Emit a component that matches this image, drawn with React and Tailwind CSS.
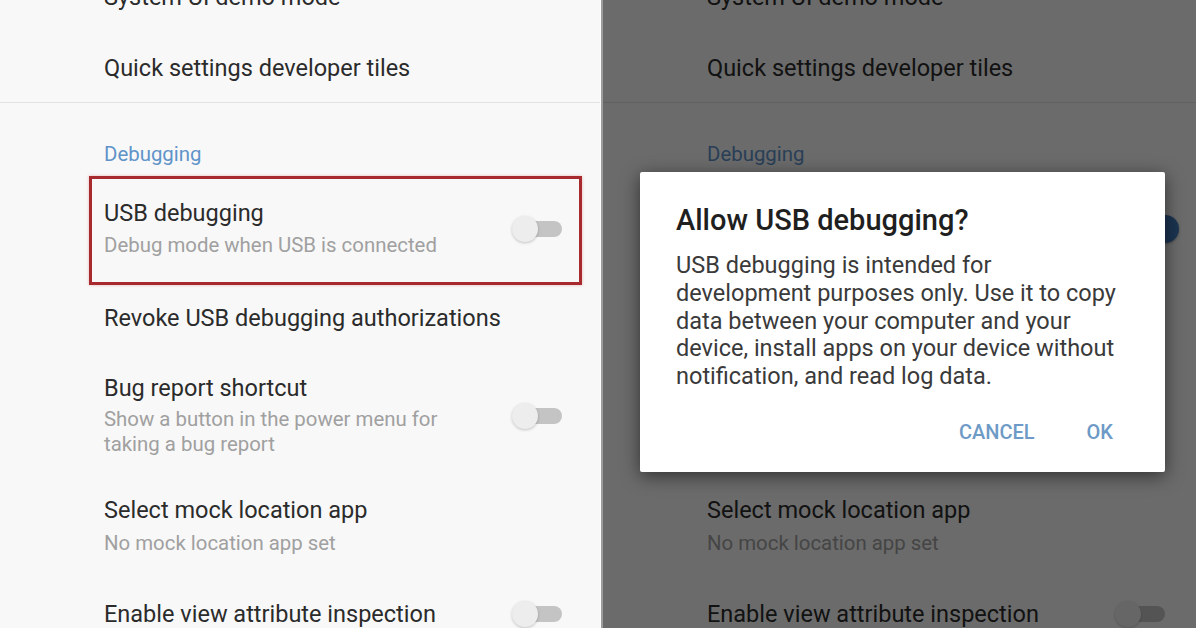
const TITLE = 'text-[23.5px] leading-[28px] text-[#2b2b2b]';
const SUMMARY = 'text-[20.4px] leading-[26px] text-[#a0a0a0]';

function Toggle({ on }) {
  if (on) {
    return (
      <div className="relative w-[50px] h-[26px] shrink-0">
        <div className="absolute left-[8px] right-[-8px] top-[5px] h-[16px] rounded-full bg-[#a9c4e4]" />
        <div className="absolute left-[36px] top-[-1px] w-[28px] h-[28px] rounded-full bg-[#3f78bb] shadow-[0_1px_3px_rgba(0,0,0,0.3)]" />
      </div>
    );
  }
  return (
    <div className="relative w-[50px] h-[26px] shrink-0">
      <div className="absolute left-[8px] right-0 top-[5px] h-[16px] rounded-full bg-[#c4c4c4]" />
      <div className="absolute left-0 top-0 w-[26px] h-[26px] rounded-full bg-[#ededed] shadow-[0_1px_3px_rgba(0,0,0,0.22)]" />
    </div>
  );
}

// covered = rows that sit under the dialog on the right side
function SettingsList({ highlight, usbOn, covered }) {
  const hide = covered ? 'invisible' : '';
  return (
    <div className="w-[600px] h-full bg-[#f8f8f8] font-['Roboto',sans-serif]">
      {/* top group */}
      <div className="h-[103px] border-b border-[#e2e2e2] pl-[104px] overflow-hidden">
        <p className={`-mt-[17px] ${TITLE}`}>System UI demo mode</p>
        <p className={`mt-[43px] ${TITLE}`}>Quick settings developer tiles</p>
      </div>

      {/* debugging group */}
      <div className="pl-[89px] pr-[18px]">
        <p className="pt-[39px] pl-[15px] text-[20.4px] leading-[24px] text-[#5f93c9]">Debugging</p>

        <div
          className={`mt-[10px] border-[3px] pl-[12px] pr-[17px] pt-[20px] pb-[24px] flex items-center justify-between ${
            highlight ? 'border-[#a62a2e] shadow-[0_0_3px_rgba(200,60,60,0.35)]' : 'border-transparent'
          }`}
        >
          <div className={hide}>
            <p className={TITLE}>USB debugging</p>
            <p className={`mt-[5px] ${SUMMARY}`}>Debug mode when USB is connected</p>
          </div>
          <Toggle on={usbOn} />
        </div>

        <p className={`mt-[19px] pl-[15px] ${TITLE} ${hide}`}>Revoke USB debugging authorizations</p>

        <div className={`mt-[42px] pl-[15px] pr-[20px] flex items-center justify-between ${hide}`}>
          <div>
            <p className={TITLE}>Bug report shortcut</p>
            <p className="mt-[5px] text-[20.4px] leading-[25px] text-[#a0a0a0]">
              <span className="block whitespace-nowrap">Show a button in the power menu for</span>
              <span className="block whitespace-nowrap">taking a bug report</span>
            </p>
          </div>
          <Toggle />
        </div>

        <div className="mt-[39px] pl-[15px]">
          <p className={TITLE}>Select mock location app</p>
          <p className={`mt-[6px] ${SUMMARY}`}>No mock location app set</p>
        </div>

        <div className="mt-[44px] pl-[15px] pr-[20px] flex items-center justify-between">
          <p className={TITLE}>Enable view attribute inspection</p>
          <Toggle />
        </div>
      </div>
    </div>
  );
}

function Dialog() {
  return (
    <div className="absolute left-[37px] top-[172px] w-[525px] h-[300px] bg-white rounded-[2px] shadow-[0_4px_18px_rgba(0,0,0,0.55)] pl-[36px] pr-[52px] pt-[31px] font-['Roboto',sans-serif]">
      <h2 className="text-[29px] leading-[34px] font-medium text-[#1f1f1f]">Allow USB debugging?</h2>
      <p className="mt-[15px] text-[23.5px] leading-[27.75px] text-[#3a3a3a]">
        <span className="block whitespace-nowrap">USB debugging is intended for</span>
        <span className="block whitespace-nowrap">development purposes only. Use it to copy</span>
        <span className="block whitespace-nowrap">data between your computer and your</span>
        <span className="block whitespace-nowrap">device, install apps on your device without</span>
        <span className="block whitespace-nowrap">notification, and read log data.</span>
      </p>
      <div className="mt-[29px] flex justify-end gap-[52px] text-[20px] leading-[24px] font-medium text-[#6d9ac6]">
        <button>CANCEL</button>
        <button>OK</button>
      </div>
    </div>
  );
}

export default function App() {
  return (
    <div className="w-[1196px] h-[628px] overflow-hidden flex bg-[#f8f8f8]">
      <div className="w-[600px] h-full shrink-0 overflow-hidden">
        <SettingsList highlight />
      </div>
      <div className="w-[1px] h-full bg-[#fcfcfc]" />
      <div className="w-[2px] h-full bg-[#9c9c9c]" />
      <div className="relative flex-1 h-full overflow-hidden">
        <SettingsList usbOn covered />
        <div className="absolute inset-0 bg-black/[0.57]" />
        <Dialog />
      </div>
    </div>
  );
}
